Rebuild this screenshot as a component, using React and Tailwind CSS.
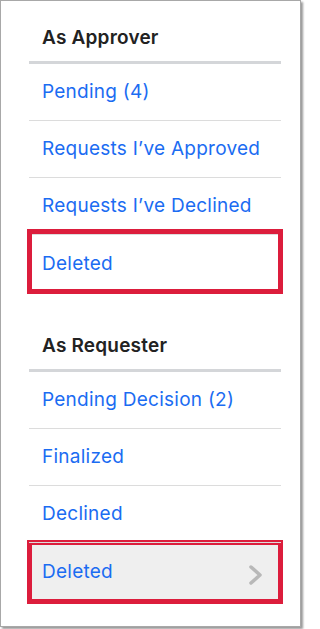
const approver = ['Pending (4)', "Requests I\u2019ve Approved", "Requests I\u2019ve Declined", 'Deleted']
const requester = ['Pending Decision (2)', 'Finalized', 'Declined', 'Deleted']

function Row({ label, last, children }) {
  return (
    <div className={'relative h-[57px] flex items-center pl-[13px] ' + (last ? '' : 'border-b border-[#dcdcdc]')}>
      <span className="text-[19px] tracking-[0.25px] text-[#1b6cf2] leading-6">{label}</span>
      {children}
    </div>
  )
}

function Section({ title, items, highlight }) {
  return (
    <div>
      <div className="pl-[13px] pb-[11px] text-[19px] tracking-[0.2px] font-semibold leading-6 text-[#222]">{title}</div>
      <div className="h-[3px] bg-[#d4d6d9]" />
      {items.map((item, i) => {
        const last = i === items.length - 1
        if (!last) return <Row key={item} label={item} />
        return (
          <Row key={item} label={item} last>
            {highlight === 'grey' && (
              <>
                <div className="absolute -left-[2px] -right-[2px] -top-[3px] bottom-[-4px] border-[5px] border-[#dc1d3c] bg-[#efefef] -z-10" />
                <svg className="absolute right-[18px] top-[21px]" width="15" height="22" viewBox="0 0 15 22" fill="none">
                  <path d="M3 3 L12 11 L3 19" stroke="#b8b8b8" strokeWidth="3.5" strokeLinecap="round" strokeLinejoin="round" />
                </svg>
              </>
            )}
            {highlight === 'plain' && (
              <div className="absolute -left-[2px] -right-[2px] -top-[6px] bottom-[-2px] border-[5px] border-[#dc1d3c]" />
            )}
          </Row>
        )
      })}
    </div>
  )
}

export default function App() {
  return (
    <div className="w-[305px] h-[629px] bg-white" style={{ fontFamily: 'Inter, "Open Sans", sans-serif' }}>
      <div className="w-[301px] h-[627px] border border-[#a8a8a8] shadow-[2px_2px_2px_rgba(0,0,0,0.4)] bg-white pt-[25px] pl-[28px]">
        <div className="w-[252px] relative isolate">
          <Section title="As Approver" items={approver} highlight="plain" />
          <div className="h-[42px]" />
          <Section title="As Requester" items={requester} highlight="grey" />
        </div>
      </div>
    </div>
  )
}
